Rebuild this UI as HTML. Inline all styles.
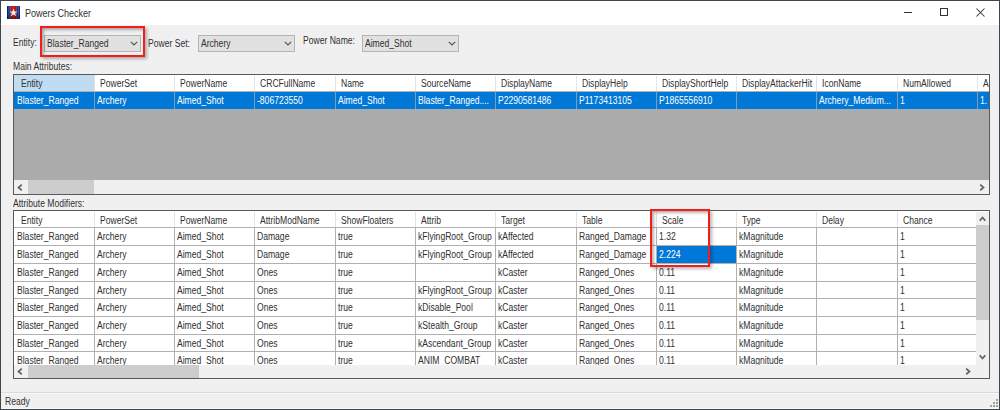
<!DOCTYPE html>
<html><head><meta charset="utf-8"><style>
html,body{margin:0;padding:0;}
body{width:1000px;height:410px;position:relative;overflow:hidden;background:#f0f0f0;font-family:"Liberation Sans",sans-serif;}
.r{position:absolute;box-sizing:content-box;}
.t{position:absolute;white-space:nowrap;line-height:10px;font-size:9px;transform-origin:0 0;}
.clip{position:absolute;overflow:hidden;}
</style></head><body><div id="w" style="position:absolute;left:0;top:0;width:1000px;height:410px;">
<div class="r" style="left:0.00px;top:0.00px;width:1000.00px;height:25.00px;background:#ffffff;"></div>
<div class="r" style="left:0.00px;top:0.00px;width:1000.00px;height:1.00px;background:#3d4550;"></div>
<div class="r" style="left:0.00px;top:0.00px;width:1.00px;height:410.00px;background:#3d4550;"></div>
<div class="r" style="left:999.00px;top:0.00px;width:1.00px;height:410.00px;background:#3d4550;"></div>
<div class="r" style="left:0.00px;top:409.00px;width:1000.00px;height:1.00px;background:#3d4550;"></div>
<svg class="r" style="left:7px;top:5.5px" width="13" height="13" viewBox="0 0 13 13">
<defs>
<linearGradient id="gb" x1="0" x2="1" y1="0" y2="0"><stop offset="0" stop-color="#061050"/><stop offset="0.55" stop-color="#2f62d0"/><stop offset="1" stop-color="#0a1860"/></linearGradient>
<linearGradient id="gr" x1="0" x2="1" y1="0" y2="0"><stop offset="0" stop-color="#a01010"/><stop offset="0.5" stop-color="#e02a18"/><stop offset="1" stop-color="#a01010"/></linearGradient>
<linearGradient id="gd" x1="0" x2="0" y1="0" y2="1"><stop offset="0" stop-color="#000" stop-opacity="0"/><stop offset="0.6" stop-color="#000" stop-opacity="0.1"/><stop offset="1" stop-color="#000" stop-opacity="0.45"/></linearGradient>
</defs>
<rect x="0" y="0" width="3.6" height="13" fill="url(#gb)"/>
<rect x="9.4" y="0" width="3.6" height="13" fill="url(#gb)"/>
<rect x="3.6" y="0" width="5.8" height="13" fill="url(#gr)"/>
<rect x="0" y="0" width="13" height="13" fill="url(#gd)"/>
<polygon points="6.5,2.6 7.6,5.4 10.5,5.5 8.2,7.3 9.1,10.2 6.5,8.5 3.9,10.2 4.8,7.3 2.5,5.5 5.4,5.4" fill="#f0eaea"/>
</svg>
<div class="t" style="left:25.00px;top:7.56px;color:#303030;font-size:10.5px;transform:scaleX(0.857);">Powers Checker</div>
<div class="r" style="left:904.00px;top:12.00px;width:8.00px;height:1.00px;background:#333;"></div>
<div class="r" style="left:940px;top:8px;width:6px;height:6px;border:1px solid #333"></div>
<svg class="r" style="left:976px;top:8px" width="9" height="9" viewBox="0 0 9 9"><path d="M0.5 0.5 L8.5 8.5 M8.5 0.5 L0.5 8.5" stroke="#333" stroke-width="1.05"/></svg>
<div class="r" style="left:1.00px;top:25.00px;width:998.00px;height:384.00px;background:#f0f0f0;"></div>
<div class="r" style="left:1.00px;top:408.00px;width:998.00px;height:1.00px;background:#f9f9f9;"></div>
<div class="t" style="left:13.30px;top:37.73px;color:#303030;font-size:10px;transform:scaleX(0.857);">Entity:</div>
<div class="r" style="left:44px;top:35px;width:95px;height:15px;background:#e1e1e1;border:1px solid #b4b4b4"></div>
<div class="t" style="left:47.00px;top:39.34px;color:#303030;font-size:10px;transform:scaleX(0.857);">Blaster_Ranged</div>
<svg class="r" style="left:129.5px;top:41px" width="8" height="5" viewBox="0 0 8 5"><path d="M0.8 0.8 L4 4 L7.2 0.8" fill="none" stroke="#555" stroke-width="1.2"/></svg>
<div class="t" style="left:148.40px;top:38.53px;color:#303030;font-size:10px;transform:scaleX(0.857);">Power Set:</div>
<div class="r" style="left:198px;top:35px;width:95px;height:15px;background:#e1e1e1;border:1px solid #b4b4b4"></div>
<div class="t" style="left:201.00px;top:39.34px;color:#303030;font-size:10px;transform:scaleX(0.857);">Archery</div>
<svg class="r" style="left:283.5px;top:41px" width="8" height="5" viewBox="0 0 8 5"><path d="M0.8 0.8 L4 4 L7.2 0.8" fill="none" stroke="#555" stroke-width="1.2"/></svg>
<div class="t" style="left:302.60px;top:36.14px;color:#303030;font-size:10px;transform:scaleX(0.857);">Power Name:</div>
<div class="r" style="left:362px;top:35px;width:95px;height:15px;background:#e1e1e1;border:1px solid #b4b4b4"></div>
<div class="t" style="left:365.00px;top:39.34px;color:#303030;font-size:10px;transform:scaleX(0.857);">Aimed_Shot</div>
<svg class="r" style="left:447.5px;top:41px" width="8" height="5" viewBox="0 0 8 5"><path d="M0.8 0.8 L4 4 L7.2 0.8" fill="none" stroke="#555" stroke-width="1.2"/></svg>
<div class="r" style="left:40px;top:25.5px;width:101px;height:27.5px;border:2px solid #f21d1d;box-shadow:2px 2px 3px rgba(0,0,0,0.28), inset 2px 2px 3px rgba(0,0,0,0.3)"></div>
<div class="t" style="left:13.00px;top:62.33px;color:#303030;font-size:10px;transform:scaleX(0.857);">Main Attributes:</div>
<div class="r" style="left:13.00px;top:74.00px;width:977.00px;height:121.00px;background:#5a5a5a;"></div>
<div class="r" style="left:14.00px;top:75.00px;width:975.00px;height:119.00px;background:#ababab;"></div>
<div class="r" style="left:14.00px;top:75.00px;width:975.00px;height:16.00px;background:#ffffff;"></div>
<div class="r" style="left:14.00px;top:75.00px;width:81.00px;height:16.00px;background:#bfdcf3;"></div>
<div class="r" style="left:14.00px;top:91.00px;width:975.00px;height:1.00px;background:#b0b0b0;"></div>
<div class="r" style="left:14.00px;top:92.00px;width:975.00px;height:17.00px;background:#0078d7;"></div>
<div class="r" style="left:94.00px;top:76.00px;width:1.00px;height:15.00px;background:#e3e3e3;"></div>
<div class="r" style="left:94.00px;top:92.00px;width:1.00px;height:17.00px;background:#7a9ec0;"></div>
<div class="r" style="left:174.00px;top:76.00px;width:1.00px;height:15.00px;background:#e3e3e3;"></div>
<div class="r" style="left:174.00px;top:92.00px;width:1.00px;height:17.00px;background:#7a9ec0;"></div>
<div class="r" style="left:254.00px;top:76.00px;width:1.00px;height:15.00px;background:#e3e3e3;"></div>
<div class="r" style="left:254.00px;top:92.00px;width:1.00px;height:17.00px;background:#7a9ec0;"></div>
<div class="r" style="left:335.00px;top:76.00px;width:1.00px;height:15.00px;background:#e3e3e3;"></div>
<div class="r" style="left:335.00px;top:92.00px;width:1.00px;height:17.00px;background:#7a9ec0;"></div>
<div class="r" style="left:415.00px;top:76.00px;width:1.00px;height:15.00px;background:#e3e3e3;"></div>
<div class="r" style="left:415.00px;top:92.00px;width:1.00px;height:17.00px;background:#7a9ec0;"></div>
<div class="r" style="left:495.00px;top:76.00px;width:1.00px;height:15.00px;background:#e3e3e3;"></div>
<div class="r" style="left:495.00px;top:92.00px;width:1.00px;height:17.00px;background:#7a9ec0;"></div>
<div class="r" style="left:576.00px;top:76.00px;width:1.00px;height:15.00px;background:#e3e3e3;"></div>
<div class="r" style="left:576.00px;top:92.00px;width:1.00px;height:17.00px;background:#7a9ec0;"></div>
<div class="r" style="left:656.00px;top:76.00px;width:1.00px;height:15.00px;background:#e3e3e3;"></div>
<div class="r" style="left:656.00px;top:92.00px;width:1.00px;height:17.00px;background:#7a9ec0;"></div>
<div class="r" style="left:736.00px;top:76.00px;width:1.00px;height:15.00px;background:#e3e3e3;"></div>
<div class="r" style="left:736.00px;top:92.00px;width:1.00px;height:17.00px;background:#7a9ec0;"></div>
<div class="r" style="left:816.00px;top:76.00px;width:1.00px;height:15.00px;background:#e3e3e3;"></div>
<div class="r" style="left:816.00px;top:92.00px;width:1.00px;height:17.00px;background:#7a9ec0;"></div>
<div class="r" style="left:897.00px;top:76.00px;width:1.00px;height:15.00px;background:#e3e3e3;"></div>
<div class="r" style="left:897.00px;top:92.00px;width:1.00px;height:17.00px;background:#7a9ec0;"></div>
<div class="r" style="left:977.00px;top:76.00px;width:1.00px;height:15.00px;background:#e3e3e3;"></div>
<div class="r" style="left:977.00px;top:92.00px;width:1.00px;height:17.00px;background:#7a9ec0;"></div>
<div class="clip" style="left:14px;top:75px;width:975px;height:34px">
<div class="t" style="left:6.50px;top:4.03px;color:#303030;font-size:10px;transform:scaleX(0.857);">Entity</div>
<div class="t" style="left:86.00px;top:4.03px;color:#303030;font-size:10px;transform:scaleX(0.857);">PowerSet</div>
<div class="t" style="left:166.00px;top:4.03px;color:#303030;font-size:10px;transform:scaleX(0.857);">PowerName</div>
<div class="t" style="left:246.00px;top:4.03px;color:#303030;font-size:10px;transform:scaleX(0.857);">CRCFullName</div>
<div class="t" style="left:327.00px;top:4.03px;color:#303030;font-size:10px;transform:scaleX(0.857);">Name</div>
<div class="t" style="left:407.00px;top:4.03px;color:#303030;font-size:10px;transform:scaleX(0.857);">SourceName</div>
<div class="t" style="left:487.00px;top:4.03px;color:#303030;font-size:10px;transform:scaleX(0.857);">DisplayName</div>
<div class="t" style="left:568.00px;top:4.03px;color:#303030;font-size:10px;transform:scaleX(0.857);">DisplayHelp</div>
<div class="t" style="left:648.00px;top:4.03px;color:#303030;font-size:10px;transform:scaleX(0.857);">DisplayShortHelp</div>
<div class="t" style="left:728.00px;top:4.03px;color:#303030;font-size:10px;transform:scaleX(0.857);">DisplayAttackerHit</div>
<div class="t" style="left:808.00px;top:4.03px;color:#303030;font-size:10px;transform:scaleX(0.857);">IconName</div>
<div class="t" style="left:889.00px;top:4.03px;color:#303030;font-size:10px;transform:scaleX(0.857);">NumAllowed</div>
<div class="t" style="left:969.00px;top:4.03px;color:#303030;font-size:10px;transform:scaleX(0.857);">A</div>
<div class="t" style="left:3.00px;top:21.03px;color:#fff;font-size:10px;transform:scaleX(0.857);">Blaster_Ranged</div>
<div class="t" style="left:83.10px;top:21.03px;color:#fff;font-size:10px;transform:scaleX(0.857);">Archery</div>
<div class="t" style="left:163.10px;top:21.03px;color:#fff;font-size:10px;transform:scaleX(0.857);">Aimed_Shot</div>
<div class="t" style="left:243.10px;top:21.03px;color:#fff;font-size:10px;transform:scaleX(0.857);">-806723550</div>
<div class="t" style="left:324.10px;top:21.03px;color:#fff;font-size:10px;transform:scaleX(0.857);">Aimed_Shot</div>
<div class="t" style="left:404.10px;top:21.03px;color:#fff;font-size:10px;transform:scaleX(0.857);">Blaster_Ranged....</div>
<div class="t" style="left:484.10px;top:21.03px;color:#fff;font-size:10px;transform:scaleX(0.857);">P2290581486</div>
<div class="t" style="left:565.10px;top:21.03px;color:#fff;font-size:10px;transform:scaleX(0.857);">P1173413105</div>
<div class="t" style="left:645.10px;top:21.03px;color:#fff;font-size:10px;transform:scaleX(0.857);">P1865556910</div>
<div class="t" style="left:725.10px;top:21.03px;color:#fff;font-size:10px;transform:scaleX(0.857);"></div>
<div class="t" style="left:805.10px;top:21.03px;color:#fff;font-size:10px;transform:scaleX(0.857);">Archery_Medium...</div>
<div class="t" style="left:886.10px;top:21.03px;color:#fff;font-size:10px;transform:scaleX(0.857);">1</div>
<div class="t" style="left:966.10px;top:21.03px;color:#fff;font-size:10px;transform:scaleX(0.857);">1.</div>
</div>
<div class="r" style="left:14.00px;top:180.00px;width:975.00px;height:14.00px;background:#f0f0f0;"></div>
<div class="r" style="left:27.50px;top:180.00px;width:66.50px;height:14.00px;background:#cdcdcd;"></div>
<svg class="r" style="left:17px;top:184px" width="6" height="7" viewBox="0 0 6 7"><path d="M4.8 0.7 L1.5 3.5 L4.8 6.3" fill="none" stroke="#606060" stroke-width="1.7"/></svg>
<svg class="r" style="left:979px;top:184px" width="6" height="7" viewBox="0 0 6 7"><path d="M1.2 0.7 L4.5 3.5 L1.2 6.3" fill="none" stroke="#606060" stroke-width="1.7"/></svg>
<div class="t" style="left:13.00px;top:198.63px;color:#303030;font-size:10px;transform:scaleX(0.857);">Attribute Modifiers:</div>
<div class="r" style="left:13.00px;top:210.00px;width:977.00px;height:169.00px;background:#5a5a5a;"></div>
<div class="r" style="left:14.00px;top:211.00px;width:975.00px;height:167.00px;background:#ffffff;"></div>
<div class="clip" style="left:14px;top:212px;width:962px;height:153px">
<div class="r" style="left:0.00px;top:15.00px;width:962.00px;height:1.00px;background:#b0b0b0;"></div>
<div class="r" style="left:80.00px;top:0.00px;width:1.00px;height:15.00px;background:#e3e3e3;"></div>
<div class="r" style="left:160.00px;top:0.00px;width:1.00px;height:15.00px;background:#e3e3e3;"></div>
<div class="r" style="left:240.00px;top:0.00px;width:1.00px;height:15.00px;background:#e3e3e3;"></div>
<div class="r" style="left:321.00px;top:0.00px;width:1.00px;height:15.00px;background:#e3e3e3;"></div>
<div class="r" style="left:401.00px;top:0.00px;width:1.00px;height:15.00px;background:#e3e3e3;"></div>
<div class="r" style="left:481.00px;top:0.00px;width:1.00px;height:15.00px;background:#e3e3e3;"></div>
<div class="r" style="left:562.00px;top:0.00px;width:1.00px;height:15.00px;background:#e3e3e3;"></div>
<div class="r" style="left:642.00px;top:0.00px;width:1.00px;height:15.00px;background:#e3e3e3;"></div>
<div class="r" style="left:722.00px;top:0.00px;width:1.00px;height:15.00px;background:#e3e3e3;"></div>
<div class="r" style="left:802.00px;top:0.00px;width:1.00px;height:15.00px;background:#e3e3e3;"></div>
<div class="r" style="left:883.00px;top:0.00px;width:1.00px;height:15.00px;background:#e3e3e3;"></div>
<div class="r" style="left:963.00px;top:0.00px;width:1.00px;height:15.00px;background:#e3e3e3;"></div>
<div class="r" style="left:0.00px;top:33.00px;width:962.00px;height:1.00px;background:#b0b0b0;"></div>
<div class="r" style="left:80.00px;top:16.00px;width:1.00px;height:17.00px;background:#b0b0b0;"></div>
<div class="r" style="left:160.00px;top:16.00px;width:1.00px;height:17.00px;background:#b0b0b0;"></div>
<div class="r" style="left:240.00px;top:16.00px;width:1.00px;height:17.00px;background:#b0b0b0;"></div>
<div class="r" style="left:321.00px;top:16.00px;width:1.00px;height:17.00px;background:#b0b0b0;"></div>
<div class="r" style="left:401.00px;top:16.00px;width:1.00px;height:17.00px;background:#b0b0b0;"></div>
<div class="r" style="left:481.00px;top:16.00px;width:1.00px;height:17.00px;background:#b0b0b0;"></div>
<div class="r" style="left:562.00px;top:16.00px;width:1.00px;height:17.00px;background:#b0b0b0;"></div>
<div class="r" style="left:642.00px;top:16.00px;width:1.00px;height:17.00px;background:#b0b0b0;"></div>
<div class="r" style="left:722.00px;top:16.00px;width:1.00px;height:17.00px;background:#b0b0b0;"></div>
<div class="r" style="left:802.00px;top:16.00px;width:1.00px;height:17.00px;background:#b0b0b0;"></div>
<div class="r" style="left:883.00px;top:16.00px;width:1.00px;height:17.00px;background:#b0b0b0;"></div>
<div class="r" style="left:963.00px;top:16.00px;width:1.00px;height:17.00px;background:#b0b0b0;"></div>
<div class="r" style="left:0.00px;top:51.00px;width:962.00px;height:1.00px;background:#b0b0b0;"></div>
<div class="r" style="left:80.00px;top:34.00px;width:1.00px;height:17.00px;background:#b0b0b0;"></div>
<div class="r" style="left:160.00px;top:34.00px;width:1.00px;height:17.00px;background:#b0b0b0;"></div>
<div class="r" style="left:240.00px;top:34.00px;width:1.00px;height:17.00px;background:#b0b0b0;"></div>
<div class="r" style="left:321.00px;top:34.00px;width:1.00px;height:17.00px;background:#b0b0b0;"></div>
<div class="r" style="left:401.00px;top:34.00px;width:1.00px;height:17.00px;background:#b0b0b0;"></div>
<div class="r" style="left:481.00px;top:34.00px;width:1.00px;height:17.00px;background:#b0b0b0;"></div>
<div class="r" style="left:562.00px;top:34.00px;width:1.00px;height:17.00px;background:#b0b0b0;"></div>
<div class="r" style="left:642.00px;top:34.00px;width:1.00px;height:17.00px;background:#b0b0b0;"></div>
<div class="r" style="left:722.00px;top:34.00px;width:1.00px;height:17.00px;background:#b0b0b0;"></div>
<div class="r" style="left:802.00px;top:34.00px;width:1.00px;height:17.00px;background:#b0b0b0;"></div>
<div class="r" style="left:883.00px;top:34.00px;width:1.00px;height:17.00px;background:#b0b0b0;"></div>
<div class="r" style="left:963.00px;top:34.00px;width:1.00px;height:17.00px;background:#b0b0b0;"></div>
<div class="r" style="left:0.00px;top:69.00px;width:962.00px;height:1.00px;background:#b0b0b0;"></div>
<div class="r" style="left:80.00px;top:52.00px;width:1.00px;height:17.00px;background:#b0b0b0;"></div>
<div class="r" style="left:160.00px;top:52.00px;width:1.00px;height:17.00px;background:#b0b0b0;"></div>
<div class="r" style="left:240.00px;top:52.00px;width:1.00px;height:17.00px;background:#b0b0b0;"></div>
<div class="r" style="left:321.00px;top:52.00px;width:1.00px;height:17.00px;background:#b0b0b0;"></div>
<div class="r" style="left:401.00px;top:52.00px;width:1.00px;height:17.00px;background:#b0b0b0;"></div>
<div class="r" style="left:481.00px;top:52.00px;width:1.00px;height:17.00px;background:#b0b0b0;"></div>
<div class="r" style="left:562.00px;top:52.00px;width:1.00px;height:17.00px;background:#b0b0b0;"></div>
<div class="r" style="left:642.00px;top:52.00px;width:1.00px;height:17.00px;background:#b0b0b0;"></div>
<div class="r" style="left:722.00px;top:52.00px;width:1.00px;height:17.00px;background:#b0b0b0;"></div>
<div class="r" style="left:802.00px;top:52.00px;width:1.00px;height:17.00px;background:#b0b0b0;"></div>
<div class="r" style="left:883.00px;top:52.00px;width:1.00px;height:17.00px;background:#b0b0b0;"></div>
<div class="r" style="left:963.00px;top:52.00px;width:1.00px;height:17.00px;background:#b0b0b0;"></div>
<div class="r" style="left:0.00px;top:86.00px;width:962.00px;height:1.00px;background:#b0b0b0;"></div>
<div class="r" style="left:80.00px;top:70.00px;width:1.00px;height:16.00px;background:#b0b0b0;"></div>
<div class="r" style="left:160.00px;top:70.00px;width:1.00px;height:16.00px;background:#b0b0b0;"></div>
<div class="r" style="left:240.00px;top:70.00px;width:1.00px;height:16.00px;background:#b0b0b0;"></div>
<div class="r" style="left:321.00px;top:70.00px;width:1.00px;height:16.00px;background:#b0b0b0;"></div>
<div class="r" style="left:401.00px;top:70.00px;width:1.00px;height:16.00px;background:#b0b0b0;"></div>
<div class="r" style="left:481.00px;top:70.00px;width:1.00px;height:16.00px;background:#b0b0b0;"></div>
<div class="r" style="left:562.00px;top:70.00px;width:1.00px;height:16.00px;background:#b0b0b0;"></div>
<div class="r" style="left:642.00px;top:70.00px;width:1.00px;height:16.00px;background:#b0b0b0;"></div>
<div class="r" style="left:722.00px;top:70.00px;width:1.00px;height:16.00px;background:#b0b0b0;"></div>
<div class="r" style="left:802.00px;top:70.00px;width:1.00px;height:16.00px;background:#b0b0b0;"></div>
<div class="r" style="left:883.00px;top:70.00px;width:1.00px;height:16.00px;background:#b0b0b0;"></div>
<div class="r" style="left:963.00px;top:70.00px;width:1.00px;height:16.00px;background:#b0b0b0;"></div>
<div class="r" style="left:0.00px;top:104.00px;width:962.00px;height:1.00px;background:#b0b0b0;"></div>
<div class="r" style="left:80.00px;top:87.00px;width:1.00px;height:17.00px;background:#b0b0b0;"></div>
<div class="r" style="left:160.00px;top:87.00px;width:1.00px;height:17.00px;background:#b0b0b0;"></div>
<div class="r" style="left:240.00px;top:87.00px;width:1.00px;height:17.00px;background:#b0b0b0;"></div>
<div class="r" style="left:321.00px;top:87.00px;width:1.00px;height:17.00px;background:#b0b0b0;"></div>
<div class="r" style="left:401.00px;top:87.00px;width:1.00px;height:17.00px;background:#b0b0b0;"></div>
<div class="r" style="left:481.00px;top:87.00px;width:1.00px;height:17.00px;background:#b0b0b0;"></div>
<div class="r" style="left:562.00px;top:87.00px;width:1.00px;height:17.00px;background:#b0b0b0;"></div>
<div class="r" style="left:642.00px;top:87.00px;width:1.00px;height:17.00px;background:#b0b0b0;"></div>
<div class="r" style="left:722.00px;top:87.00px;width:1.00px;height:17.00px;background:#b0b0b0;"></div>
<div class="r" style="left:802.00px;top:87.00px;width:1.00px;height:17.00px;background:#b0b0b0;"></div>
<div class="r" style="left:883.00px;top:87.00px;width:1.00px;height:17.00px;background:#b0b0b0;"></div>
<div class="r" style="left:963.00px;top:87.00px;width:1.00px;height:17.00px;background:#b0b0b0;"></div>
<div class="r" style="left:0.00px;top:122.00px;width:962.00px;height:1.00px;background:#b0b0b0;"></div>
<div class="r" style="left:80.00px;top:105.00px;width:1.00px;height:17.00px;background:#b0b0b0;"></div>
<div class="r" style="left:160.00px;top:105.00px;width:1.00px;height:17.00px;background:#b0b0b0;"></div>
<div class="r" style="left:240.00px;top:105.00px;width:1.00px;height:17.00px;background:#b0b0b0;"></div>
<div class="r" style="left:321.00px;top:105.00px;width:1.00px;height:17.00px;background:#b0b0b0;"></div>
<div class="r" style="left:401.00px;top:105.00px;width:1.00px;height:17.00px;background:#b0b0b0;"></div>
<div class="r" style="left:481.00px;top:105.00px;width:1.00px;height:17.00px;background:#b0b0b0;"></div>
<div class="r" style="left:562.00px;top:105.00px;width:1.00px;height:17.00px;background:#b0b0b0;"></div>
<div class="r" style="left:642.00px;top:105.00px;width:1.00px;height:17.00px;background:#b0b0b0;"></div>
<div class="r" style="left:722.00px;top:105.00px;width:1.00px;height:17.00px;background:#b0b0b0;"></div>
<div class="r" style="left:802.00px;top:105.00px;width:1.00px;height:17.00px;background:#b0b0b0;"></div>
<div class="r" style="left:883.00px;top:105.00px;width:1.00px;height:17.00px;background:#b0b0b0;"></div>
<div class="r" style="left:963.00px;top:105.00px;width:1.00px;height:17.00px;background:#b0b0b0;"></div>
<div class="r" style="left:0.00px;top:139.00px;width:962.00px;height:1.00px;background:#b0b0b0;"></div>
<div class="r" style="left:80.00px;top:123.00px;width:1.00px;height:16.00px;background:#b0b0b0;"></div>
<div class="r" style="left:160.00px;top:123.00px;width:1.00px;height:16.00px;background:#b0b0b0;"></div>
<div class="r" style="left:240.00px;top:123.00px;width:1.00px;height:16.00px;background:#b0b0b0;"></div>
<div class="r" style="left:321.00px;top:123.00px;width:1.00px;height:16.00px;background:#b0b0b0;"></div>
<div class="r" style="left:401.00px;top:123.00px;width:1.00px;height:16.00px;background:#b0b0b0;"></div>
<div class="r" style="left:481.00px;top:123.00px;width:1.00px;height:16.00px;background:#b0b0b0;"></div>
<div class="r" style="left:562.00px;top:123.00px;width:1.00px;height:16.00px;background:#b0b0b0;"></div>
<div class="r" style="left:642.00px;top:123.00px;width:1.00px;height:16.00px;background:#b0b0b0;"></div>
<div class="r" style="left:722.00px;top:123.00px;width:1.00px;height:16.00px;background:#b0b0b0;"></div>
<div class="r" style="left:802.00px;top:123.00px;width:1.00px;height:16.00px;background:#b0b0b0;"></div>
<div class="r" style="left:883.00px;top:123.00px;width:1.00px;height:16.00px;background:#b0b0b0;"></div>
<div class="r" style="left:963.00px;top:123.00px;width:1.00px;height:16.00px;background:#b0b0b0;"></div>
<div class="r" style="left:0.00px;top:157.00px;width:962.00px;height:1.00px;background:#b0b0b0;"></div>
<div class="r" style="left:80.00px;top:140.00px;width:1.00px;height:17.00px;background:#b0b0b0;"></div>
<div class="r" style="left:160.00px;top:140.00px;width:1.00px;height:17.00px;background:#b0b0b0;"></div>
<div class="r" style="left:240.00px;top:140.00px;width:1.00px;height:17.00px;background:#b0b0b0;"></div>
<div class="r" style="left:321.00px;top:140.00px;width:1.00px;height:17.00px;background:#b0b0b0;"></div>
<div class="r" style="left:401.00px;top:140.00px;width:1.00px;height:17.00px;background:#b0b0b0;"></div>
<div class="r" style="left:481.00px;top:140.00px;width:1.00px;height:17.00px;background:#b0b0b0;"></div>
<div class="r" style="left:562.00px;top:140.00px;width:1.00px;height:17.00px;background:#b0b0b0;"></div>
<div class="r" style="left:642.00px;top:140.00px;width:1.00px;height:17.00px;background:#b0b0b0;"></div>
<div class="r" style="left:722.00px;top:140.00px;width:1.00px;height:17.00px;background:#b0b0b0;"></div>
<div class="r" style="left:802.00px;top:140.00px;width:1.00px;height:17.00px;background:#b0b0b0;"></div>
<div class="r" style="left:883.00px;top:140.00px;width:1.00px;height:17.00px;background:#b0b0b0;"></div>
<div class="r" style="left:963.00px;top:140.00px;width:1.00px;height:17.00px;background:#b0b0b0;"></div>
<div class="r" style="left:643.00px;top:34.00px;width:79.00px;height:17.00px;background:#0078d7;"></div>
<div class="t" style="left:6.50px;top:3.73px;color:#303030;font-size:10px;transform:scaleX(0.857);">Entity</div>
<div class="t" style="left:86.00px;top:3.73px;color:#303030;font-size:10px;transform:scaleX(0.857);">PowerSet</div>
<div class="t" style="left:166.00px;top:3.73px;color:#303030;font-size:10px;transform:scaleX(0.857);">PowerName</div>
<div class="t" style="left:246.00px;top:3.73px;color:#303030;font-size:10px;transform:scaleX(0.857);">AttribModName</div>
<div class="t" style="left:327.00px;top:3.73px;color:#303030;font-size:10px;transform:scaleX(0.857);">ShowFloaters</div>
<div class="t" style="left:407.00px;top:3.73px;color:#303030;font-size:10px;transform:scaleX(0.857);">Attrib</div>
<div class="t" style="left:487.00px;top:3.73px;color:#303030;font-size:10px;transform:scaleX(0.857);">Target</div>
<div class="t" style="left:568.00px;top:3.73px;color:#303030;font-size:10px;transform:scaleX(0.857);">Table</div>
<div class="t" style="left:648.00px;top:3.73px;color:#303030;font-size:10px;transform:scaleX(0.857);">Scale</div>
<div class="t" style="left:728.00px;top:3.73px;color:#303030;font-size:10px;transform:scaleX(0.857);">Type</div>
<div class="t" style="left:808.00px;top:3.73px;color:#303030;font-size:10px;transform:scaleX(0.857);">Delay</div>
<div class="t" style="left:889.00px;top:3.73px;color:#303030;font-size:10px;transform:scaleX(0.857);">Chance</div>
<div class="t" style="left:3.00px;top:19.93px;color:#303030;font-size:10px;transform:scaleX(0.857);">Blaster_Ranged</div>
<div class="t" style="left:83.00px;top:19.93px;color:#303030;font-size:10px;transform:scaleX(0.857);">Archery</div>
<div class="t" style="left:163.00px;top:19.93px;color:#303030;font-size:10px;transform:scaleX(0.857);">Aimed_Shot</div>
<div class="t" style="left:243.00px;top:19.93px;color:#303030;font-size:10px;transform:scaleX(0.857);">Damage</div>
<div class="t" style="left:324.00px;top:19.93px;color:#303030;font-size:10px;transform:scaleX(0.857);">true</div>
<div class="t" style="left:404.00px;top:19.93px;color:#303030;font-size:10px;transform:scaleX(0.857);">kFlyingRoot_Group</div>
<div class="t" style="left:484.00px;top:19.93px;color:#303030;font-size:10px;transform:scaleX(0.857);">kAffected</div>
<div class="t" style="left:565.00px;top:19.93px;color:#303030;font-size:10px;transform:scaleX(0.857);">Ranged_Damage</div>
<div class="t" style="left:645.00px;top:19.93px;color:#303030;font-size:10px;transform:scaleX(0.857);">1.32</div>
<div class="t" style="left:725.00px;top:19.93px;color:#303030;font-size:10px;transform:scaleX(0.857);">kMagnitude</div>
<div class="t" style="left:886.00px;top:19.93px;color:#303030;font-size:10px;transform:scaleX(0.857);">1</div>
<div class="t" style="left:3.00px;top:37.93px;color:#303030;font-size:10px;transform:scaleX(0.857);">Blaster_Ranged</div>
<div class="t" style="left:83.00px;top:37.93px;color:#303030;font-size:10px;transform:scaleX(0.857);">Archery</div>
<div class="t" style="left:163.00px;top:37.93px;color:#303030;font-size:10px;transform:scaleX(0.857);">Aimed_Shot</div>
<div class="t" style="left:243.00px;top:37.93px;color:#303030;font-size:10px;transform:scaleX(0.857);">Damage</div>
<div class="t" style="left:324.00px;top:37.93px;color:#303030;font-size:10px;transform:scaleX(0.857);">true</div>
<div class="t" style="left:404.00px;top:37.93px;color:#303030;font-size:10px;transform:scaleX(0.857);">kFlyingRoot_Group</div>
<div class="t" style="left:484.00px;top:37.93px;color:#303030;font-size:10px;transform:scaleX(0.857);">kAffected</div>
<div class="t" style="left:565.00px;top:37.93px;color:#303030;font-size:10px;transform:scaleX(0.857);">Ranged_Damage</div>
<div class="t" style="left:645.00px;top:37.93px;color:#fff;font-size:10px;transform:scaleX(0.857);">2.224</div>
<div class="t" style="left:725.00px;top:37.93px;color:#303030;font-size:10px;transform:scaleX(0.857);">kMagnitude</div>
<div class="t" style="left:886.00px;top:37.93px;color:#303030;font-size:10px;transform:scaleX(0.857);">1</div>
<div class="t" style="left:3.00px;top:55.93px;color:#303030;font-size:10px;transform:scaleX(0.857);">Blaster_Ranged</div>
<div class="t" style="left:83.00px;top:55.93px;color:#303030;font-size:10px;transform:scaleX(0.857);">Archery</div>
<div class="t" style="left:163.00px;top:55.93px;color:#303030;font-size:10px;transform:scaleX(0.857);">Aimed_Shot</div>
<div class="t" style="left:243.00px;top:55.93px;color:#303030;font-size:10px;transform:scaleX(0.857);">Ones</div>
<div class="t" style="left:324.00px;top:55.93px;color:#303030;font-size:10px;transform:scaleX(0.857);">true</div>
<div class="t" style="left:484.00px;top:55.93px;color:#303030;font-size:10px;transform:scaleX(0.857);">kCaster</div>
<div class="t" style="left:565.00px;top:55.93px;color:#303030;font-size:10px;transform:scaleX(0.857);">Ranged_Ones</div>
<div class="t" style="left:645.00px;top:55.93px;color:#303030;font-size:10px;transform:scaleX(0.857);">0.11</div>
<div class="t" style="left:725.00px;top:55.93px;color:#303030;font-size:10px;transform:scaleX(0.857);">kMagnitude</div>
<div class="t" style="left:886.00px;top:55.93px;color:#303030;font-size:10px;transform:scaleX(0.857);">1</div>
<div class="t" style="left:3.00px;top:73.93px;color:#303030;font-size:10px;transform:scaleX(0.857);">Blaster_Ranged</div>
<div class="t" style="left:83.00px;top:73.93px;color:#303030;font-size:10px;transform:scaleX(0.857);">Archery</div>
<div class="t" style="left:163.00px;top:73.93px;color:#303030;font-size:10px;transform:scaleX(0.857);">Aimed_Shot</div>
<div class="t" style="left:243.00px;top:73.93px;color:#303030;font-size:10px;transform:scaleX(0.857);">Ones</div>
<div class="t" style="left:324.00px;top:73.93px;color:#303030;font-size:10px;transform:scaleX(0.857);">true</div>
<div class="t" style="left:404.00px;top:73.93px;color:#303030;font-size:10px;transform:scaleX(0.857);">kFlyingRoot_Group</div>
<div class="t" style="left:484.00px;top:73.93px;color:#303030;font-size:10px;transform:scaleX(0.857);">kCaster</div>
<div class="t" style="left:565.00px;top:73.93px;color:#303030;font-size:10px;transform:scaleX(0.857);">Ranged_Ones</div>
<div class="t" style="left:645.00px;top:73.93px;color:#303030;font-size:10px;transform:scaleX(0.857);">0.11</div>
<div class="t" style="left:725.00px;top:73.93px;color:#303030;font-size:10px;transform:scaleX(0.857);">kMagnitude</div>
<div class="t" style="left:886.00px;top:73.93px;color:#303030;font-size:10px;transform:scaleX(0.857);">1</div>
<div class="t" style="left:3.00px;top:90.93px;color:#303030;font-size:10px;transform:scaleX(0.857);">Blaster_Ranged</div>
<div class="t" style="left:83.00px;top:90.93px;color:#303030;font-size:10px;transform:scaleX(0.857);">Archery</div>
<div class="t" style="left:163.00px;top:90.93px;color:#303030;font-size:10px;transform:scaleX(0.857);">Aimed_Shot</div>
<div class="t" style="left:243.00px;top:90.93px;color:#303030;font-size:10px;transform:scaleX(0.857);">Ones</div>
<div class="t" style="left:324.00px;top:90.93px;color:#303030;font-size:10px;transform:scaleX(0.857);">true</div>
<div class="t" style="left:404.00px;top:90.93px;color:#303030;font-size:10px;transform:scaleX(0.857);">kDisable_Pool</div>
<div class="t" style="left:484.00px;top:90.93px;color:#303030;font-size:10px;transform:scaleX(0.857);">kCaster</div>
<div class="t" style="left:565.00px;top:90.93px;color:#303030;font-size:10px;transform:scaleX(0.857);">Ranged_Ones</div>
<div class="t" style="left:645.00px;top:90.93px;color:#303030;font-size:10px;transform:scaleX(0.857);">0.11</div>
<div class="t" style="left:725.00px;top:90.93px;color:#303030;font-size:10px;transform:scaleX(0.857);">kMagnitude</div>
<div class="t" style="left:886.00px;top:90.93px;color:#303030;font-size:10px;transform:scaleX(0.857);">1</div>
<div class="t" style="left:3.00px;top:108.93px;color:#303030;font-size:10px;transform:scaleX(0.857);">Blaster_Ranged</div>
<div class="t" style="left:83.00px;top:108.93px;color:#303030;font-size:10px;transform:scaleX(0.857);">Archery</div>
<div class="t" style="left:163.00px;top:108.93px;color:#303030;font-size:10px;transform:scaleX(0.857);">Aimed_Shot</div>
<div class="t" style="left:243.00px;top:108.93px;color:#303030;font-size:10px;transform:scaleX(0.857);">Ones</div>
<div class="t" style="left:324.00px;top:108.93px;color:#303030;font-size:10px;transform:scaleX(0.857);">true</div>
<div class="t" style="left:404.00px;top:108.93px;color:#303030;font-size:10px;transform:scaleX(0.857);">kStealth_Group</div>
<div class="t" style="left:484.00px;top:108.93px;color:#303030;font-size:10px;transform:scaleX(0.857);">kCaster</div>
<div class="t" style="left:565.00px;top:108.93px;color:#303030;font-size:10px;transform:scaleX(0.857);">Ranged_Ones</div>
<div class="t" style="left:645.00px;top:108.93px;color:#303030;font-size:10px;transform:scaleX(0.857);">0.11</div>
<div class="t" style="left:725.00px;top:108.93px;color:#303030;font-size:10px;transform:scaleX(0.857);">kMagnitude</div>
<div class="t" style="left:886.00px;top:108.93px;color:#303030;font-size:10px;transform:scaleX(0.857);">1</div>
<div class="t" style="left:3.00px;top:126.93px;color:#303030;font-size:10px;transform:scaleX(0.857);">Blaster_Ranged</div>
<div class="t" style="left:83.00px;top:126.93px;color:#303030;font-size:10px;transform:scaleX(0.857);">Archery</div>
<div class="t" style="left:163.00px;top:126.93px;color:#303030;font-size:10px;transform:scaleX(0.857);">Aimed_Shot</div>
<div class="t" style="left:243.00px;top:126.93px;color:#303030;font-size:10px;transform:scaleX(0.857);">Ones</div>
<div class="t" style="left:324.00px;top:126.93px;color:#303030;font-size:10px;transform:scaleX(0.857);">true</div>
<div class="t" style="left:404.00px;top:126.93px;color:#303030;font-size:10px;transform:scaleX(0.857);">kAscendant_Group</div>
<div class="t" style="left:484.00px;top:126.93px;color:#303030;font-size:10px;transform:scaleX(0.857);">kCaster</div>
<div class="t" style="left:565.00px;top:126.93px;color:#303030;font-size:10px;transform:scaleX(0.857);">Ranged_Ones</div>
<div class="t" style="left:645.00px;top:126.93px;color:#303030;font-size:10px;transform:scaleX(0.857);">0.11</div>
<div class="t" style="left:725.00px;top:126.93px;color:#303030;font-size:10px;transform:scaleX(0.857);">kMagnitude</div>
<div class="t" style="left:886.00px;top:126.93px;color:#303030;font-size:10px;transform:scaleX(0.857);">1</div>
<div class="t" style="left:3.00px;top:143.93px;color:#303030;font-size:10px;transform:scaleX(0.857);">Blaster_Ranged</div>
<div class="t" style="left:83.00px;top:143.93px;color:#303030;font-size:10px;transform:scaleX(0.857);">Archery</div>
<div class="t" style="left:163.00px;top:143.93px;color:#303030;font-size:10px;transform:scaleX(0.857);">Aimed_Shot</div>
<div class="t" style="left:243.00px;top:143.93px;color:#303030;font-size:10px;transform:scaleX(0.857);">Ones</div>
<div class="t" style="left:324.00px;top:143.93px;color:#303030;font-size:10px;transform:scaleX(0.857);">true</div>
<div class="t" style="left:404.00px;top:143.93px;color:#303030;font-size:10px;transform:scaleX(0.857);">ANIM_COMBAT</div>
<div class="t" style="left:484.00px;top:143.93px;color:#303030;font-size:10px;transform:scaleX(0.857);">kCaster</div>
<div class="t" style="left:565.00px;top:143.93px;color:#303030;font-size:10px;transform:scaleX(0.857);">Ranged_Ones</div>
<div class="t" style="left:645.00px;top:143.93px;color:#303030;font-size:10px;transform:scaleX(0.857);">0.11</div>
<div class="t" style="left:725.00px;top:143.93px;color:#303030;font-size:10px;transform:scaleX(0.857);">kMagnitude</div>
<div class="t" style="left:886.00px;top:143.93px;color:#303030;font-size:10px;transform:scaleX(0.857);">1</div>
</div>
<div class="r" style="left:976.00px;top:212.00px;width:13.00px;height:153.00px;background:#f0f0f0;"></div>
<div class="r" style="left:976.00px;top:225.00px;width:13.00px;height:95.00px;background:#cdcdcd;"></div>
<svg class="r" style="left:979px;top:216px" width="7" height="6" viewBox="0 0 7 6"><path d="M0.7 4.8 L3.5 1.5 L6.3 4.8" fill="none" stroke="#606060" stroke-width="1.7"/></svg>
<svg class="r" style="left:979px;top:354px" width="7" height="6" viewBox="0 0 7 6"><path d="M0.7 1.2 L3.5 4.5 L6.3 1.2" fill="none" stroke="#606060" stroke-width="1.7"/></svg>
<div class="r" style="left:14.00px;top:365.00px;width:962.00px;height:13.00px;background:#f0f0f0;"></div>
<div class="r" style="left:976.00px;top:365.00px;width:13.00px;height:13.00px;background:#f0f0f0;"></div>
<div class="r" style="left:27.50px;top:365.00px;width:171.50px;height:13.00px;background:#cdcdcd;"></div>
<svg class="r" style="left:17px;top:368px" width="6" height="7" viewBox="0 0 6 7"><path d="M4.8 0.7 L1.5 3.5 L4.8 6.3" fill="none" stroke="#606060" stroke-width="1.7"/></svg>
<svg class="r" style="left:965px;top:368px" width="6" height="7" viewBox="0 0 6 7"><path d="M1.2 0.7 L4.5 3.5 L1.2 6.3" fill="none" stroke="#606060" stroke-width="1.7"/></svg>
<div class="r" style="left:650px;top:209px;width:55.5px;height:53.5px;border:2px solid #f21d1d;box-shadow:2px 2px 3px rgba(0,0,0,0.28), inset 2px 2px 3px rgba(0,0,0,0.3)"></div>
<div class="r" style="left:1.00px;top:392.00px;width:998.00px;height:1.00px;background:#dadada;"></div>
<div class="r" style="left:1.00px;top:393.00px;width:998.00px;height:1.00px;background:#f8f8f8;"></div>
<div class="t" style="left:4.80px;top:396.84px;color:#303030;font-size:10px;transform:scaleX(0.857);">Ready</div>
<div class="r" style="left:995.50px;top:399.00px;width:2.00px;height:2.00px;background:#a0a0a0;"></div>
<div class="r" style="left:992.50px;top:402.00px;width:2.00px;height:2.00px;background:#a0a0a0;"></div>
<div class="r" style="left:995.50px;top:402.00px;width:2.00px;height:2.00px;background:#a0a0a0;"></div>
<div class="r" style="left:989.50px;top:405.00px;width:2.00px;height:2.00px;background:#a0a0a0;"></div>
<div class="r" style="left:992.50px;top:405.00px;width:2.00px;height:2.00px;background:#a0a0a0;"></div>
<div class="r" style="left:995.50px;top:405.00px;width:2.00px;height:2.00px;background:#a0a0a0;"></div>
</div></body></html>
